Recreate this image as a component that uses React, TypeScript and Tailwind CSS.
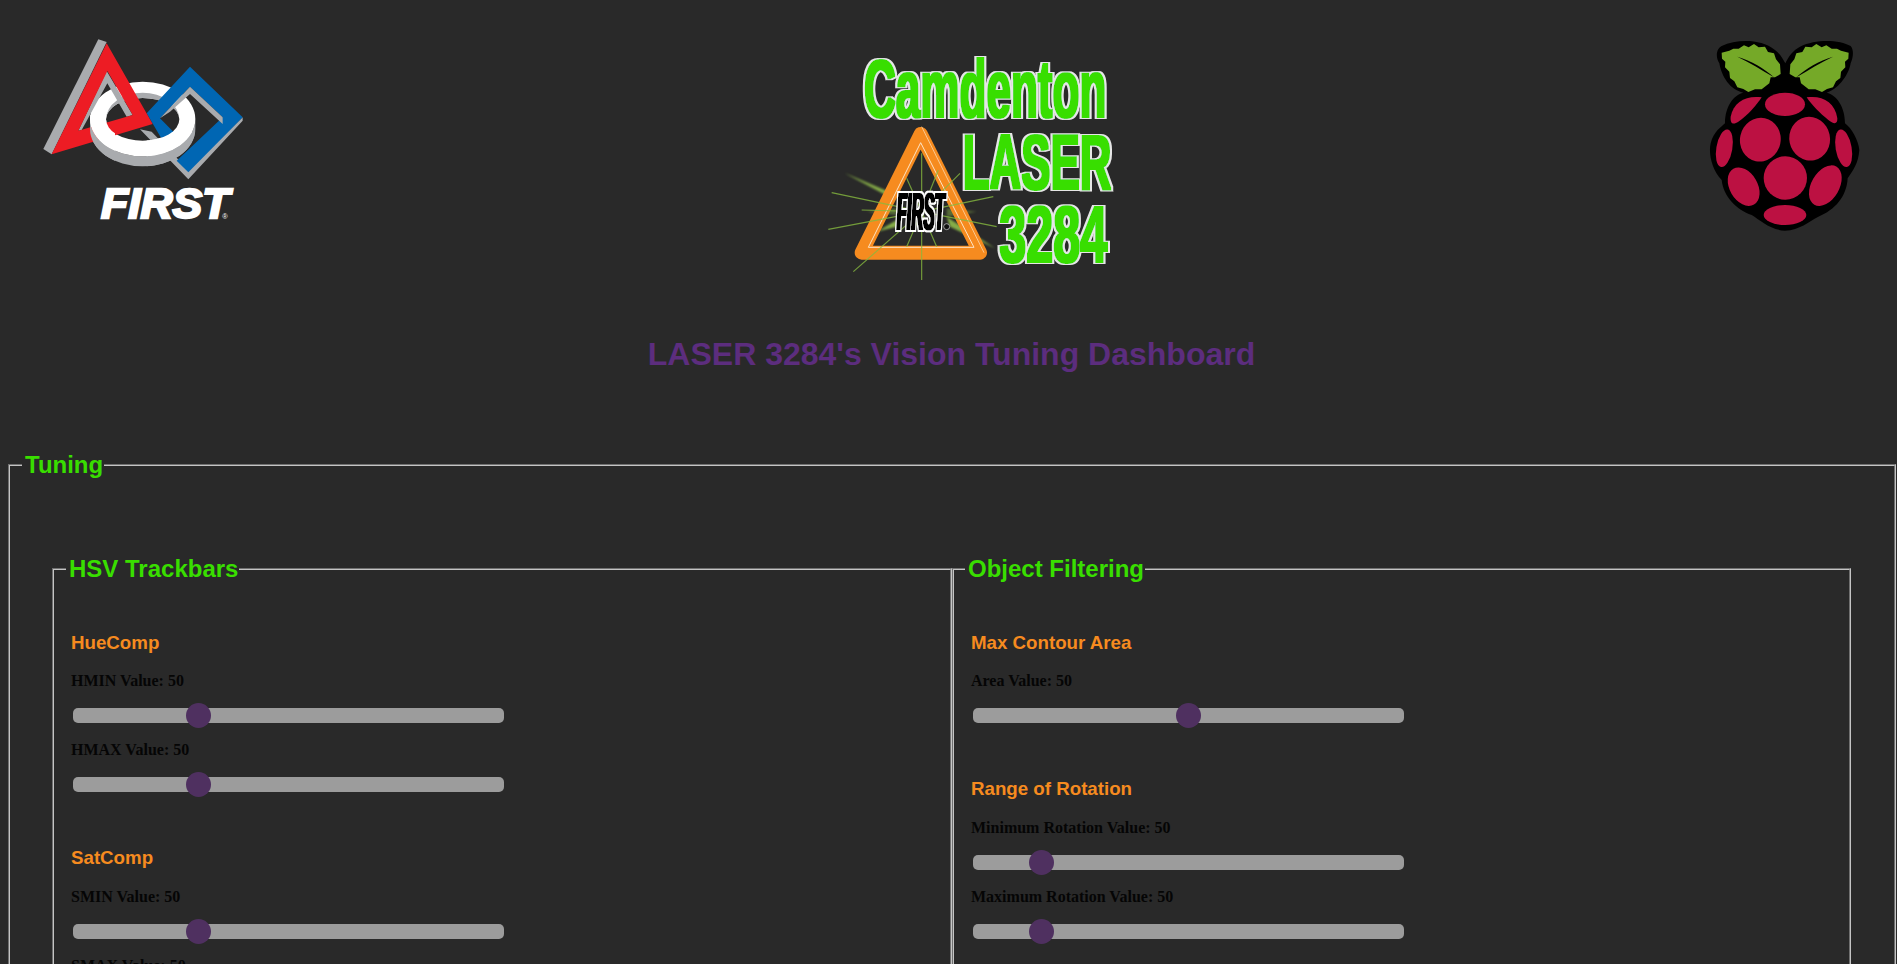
import React from "react";

const SANS = "'Liberation Sans', Arial, sans-serif";

function FirstLogo() {
  const ringOuter = "M270,357 a158,112 0 1,0 316,0 a158,112 0 1,0 -316,0 Z";
  const ringHole = "M318,358 a110,64 0 1,0 220,0 a110,64 0 1,0 -220,0 Z";
  const ringBottom = "M270,357 v30 a158,112 0 0,0 316,0 v-30 a158,112 0 0,1 -316,0 Z";
  const ringWall = "M318,358 a110,64 0 0,1 220,0 a110,80 0 0,0 -220,0 Z";
  const Ring = () => (
    <>
      <path d={ringBottom} fill="#a9abae" />
      <path d={ringOuter + " " + ringHole} fill="#fff" fillRule="evenodd" />
      <path d={ringWall} fill="#a9abae" />
    </>
  );
  return (
    <svg viewBox="0 0 900 750" width={300} height={250} className="block shrink-0">
      <defs>
        <clipPath id="ringLeft"><rect x="260" y="345" width="85" height="170" /></clipPath>
        <clipPath id="ringLow"><polygon points="440,395 620,395 620,520 440,520" /></clipPath>
      </defs>
      <polygon points="420,388 565,538 728,362 728,352 565,510 455,395" fill="#a9abae" />
      <Ring />
      <polygon points="440,340 570,200 728,352 565,517 530,482 668,352 570,260 480,355 520,395 490,425" fill="#0066b3" />
      <polygon points="570,260 668,352 668,372 570,282 510,335 480,355" fill="#a9abae" />
      <polygon points="295,118 320,126 155,463 130,447" fill="#a9abae" />
      <polygon points="320,213 398,345 380,350 322,250 245,390 235,392" fill="#a9abae" />
      <path d="M320,130 L458,372 L155,463 Z M322,213 L235,392 L398,345 Z" fill="#ed1c24" fillRule="evenodd" />
      <g clipPath="url(#ringLeft)"><Ring /></g>
      <g clipPath="url(#ringLow)"><Ring /></g>
      <text x="303" y="653" fontFamily={SANS} fontWeight="700" fontStyle="italic" fontSize="126" fill="#fff" stroke="#fff" strokeWidth="7" textLength="385" lengthAdjust="spacingAndGlyphs">FIRST</text>
      <text x="667" y="657" fontFamily={SANS} fontSize="22" fill="#fff">®</text>
    </svg>
  );
}

function LaserLogo() {
  const thin: [number, number][] = [
    [95, 488], [85, 598], [185, 540], [160, 725], [365, 750], [365, 370], [415, 420],
    [480, 430], [580, 500], [590, 590], [320, 445], [320, 650], [410, 650],
  ];
  const word = {
    fontFamily: SANS,
    fontWeight: 700,
    fill: "#39de00",
    filter: "url(#fat)",
    lengthAdjust: "spacingAndGlyphs",
  } as const;
  return (
    <svg viewBox="0 0 1020 780" width={340} height={260} className="block shrink-0 mt-[30px] ml-[500px]">
      <defs>
        <filter id="fat" x="-5%" y="-10%" width="110%" height="120%">
          <feMorphology in="SourceGraphic" operator="dilate" radius="4 3" result="body" />
          <feMorphology in="SourceAlpha" operator="dilate" radius="8 7" result="edge" />
          <feFlood floodColor="#e6e6e6" />
          <feComposite in2="edge" operator="in" result="outline" />
          <feMerge>
            <feMergeNode in="outline" />
            <feMergeNode in="body" />
          </feMerge>
        </filter>
        <filter id="fatBlack" x="-10%" y="-10%" width="120%" height="120%">
          <feMorphology in="SourceGraphic" operator="dilate" radius="3 1" result="body" />
          <feMorphology in="SourceAlpha" operator="dilate" radius="7 5" result="edge" />
          <feFlood floodColor="#ffffff" />
          <feComposite in2="edge" operator="in" result="outline" />
          <feMerge>
            <feMergeNode in="outline" />
            <feMergeNode in="body" />
          </feMerge>
        </filter>
        <filter id="glow"><feGaussianBlur stdDeviation="3" /></filter>
      </defs>
      <text x="192" y="262" fontSize="244" textLength="727" {...word}>Camdenton</text>
      <g fill="#9ecf50" filter="url(#glow)" opacity="0.8">
        <polygon points="135,430 290,495 285,510" />
        <polygon points="585,655 440,560 450,590" />
        <polygon points="200,545 290,535 290,555" opacity="0.5" />
        <polygon points="230,605 290,570 290,590" />
        <polygon points="530,545 440,535 440,560" opacity="0.5" />
      </g>
      <path d="M362,312 L540,668 L185,668 Z" fill="none" stroke="#f68b1f" strokeWidth="42" strokeLinejoin="round" />
      <path d="M205,652 H522 L362,338 Z" fill="none" stroke="#fde3c4" strokeWidth="3" />
      <path d="M365,290 L552,668" fill="none" stroke="#fbc88f" strokeWidth="3" />
      {thin.map(([x, y], i) => (
        <line key={i} x1="365" y1="545" x2={x} y2={y} stroke="#86b93f" strokeWidth="3.5" opacity="0.8" />
      ))}
      <text x="290" y="600" fontFamily={SANS} fontWeight="700" fontStyle="italic" fontSize="160" fill="#000" filter="url(#fatBlack)" textLength="144" lengthAdjust="spacingAndGlyphs">FIRST</text>
      <circle cx="440" cy="590" r="9" fill="#111" stroke="#ddd" strokeWidth="2" />
      <text x="488" y="478" fontSize="236" textLength="446" {...word}>LASER</text>
      <text x="598" y="696" fontSize="238" textLength="324" {...word}>3284</text>
    </svg>
  );
}

function RaspberryLogo() {
  const leaf = "M125,98 L148,92 L160,86 L176,86 L192,76 L206,82 L222,72 L236,82 L255,80 L264,96 L282,100 L288,118 L300,133 L302,162 L285,172 L272,172 L268,190 L245,208 L225,208 L205,216 L190,207 L172,202 L163,184 L150,174 L148,155 L135,142 L136,125 L126,116 Z";
  const vein = "M172,110 C215,122 252,145 282,172 C245,150 210,128 172,110 Z";
  const berry = "#bc1142";
  return (
    <svg viewBox="0 0 651 690" width={217} height={230} className="block shrink-0 mt-[20px] ml-[540px]">
      <path
        d="M315,632 C270,630 240,600 215,585 C170,570 130,530 125,480 C95,450 85,400 92,370 C100,335 125,320 135,310 C135,260 160,225 190,218 C150,210 125,170 118,130 C105,110 110,85 125,78 C170,58 240,55 285,90 C300,100 310,120 316,130 C325,110 340,90 360,80 C410,55 480,60 512,78 C522,90 520,110 512,130 C505,170 470,210 440,218 C470,225 495,260 495,310 C515,325 535,360 538,390 C535,430 520,450 503,475 C500,530 465,570 415,590 C385,605 360,630 315,632 Z"
        fill="#000"
      />
      <path d={leaf} fill="#75a928" />
      <path d={vein} fill="#000" />
      <g transform="translate(631,0) scale(-1,1)">
        <path d={leaf} fill="#75a928" />
        <path d={vein} fill="#000" />
      </g>
      <g fill={berry}>
        <ellipse cx="315" cy="253" rx="60" ry="35" />
        <path d="M245,232 C200,225 160,245 152,290 C150,312 160,315 175,305 C205,285 230,255 245,232 Z" />
        <path d="M380,232 C425,225 465,245 472,295 C473,315 460,312 445,300 C420,280 395,255 380,232 Z" />
        <ellipse cx="241" cy="359" rx="61" ry="66" transform="rotate(12 241 359)" />
        <ellipse cx="389" cy="356" rx="61" ry="66" transform="rotate(-12 389 356)" />
        <ellipse cx="133" cy="385" rx="24" ry="57" transform="rotate(10 133 385)" />
        <ellipse cx="491" cy="385" rx="24" ry="57" transform="rotate(-10 491 385)" />
        <circle cx="316" cy="474" r="65" />
        <ellipse cx="191" cy="500" rx="42" ry="62" transform="rotate(-30 191 500)" />
        <ellipse cx="436" cy="497" rx="42" ry="66" transform="rotate(30 436 497)" />
        <ellipse cx="315" cy="585" rx="64" ry="30" />
      </g>
    </svg>
  );
}

function Slider({ label, max }: { label: string; max: number }) {
  return (
    <div className="mb-[18px]">
      <div className="font-['Liberation_Serif',serif] font-bold text-[16px] leading-[18px] text-[#050505] mb-[18px]">
        {label}: 50
      </div>
      <input
        type="range"
        min={0}
        max={max}
        defaultValue={50}
        className="block ml-[2px] w-[431px] h-[15px] appearance-none rounded-[5px] bg-[#9c9c9c] outline-none [&::-webkit-slider-thumb]:appearance-none [&::-webkit-slider-thumb]:w-[25px] [&::-webkit-slider-thumb]:h-[25px] [&::-webkit-slider-thumb]:rounded-full [&::-webkit-slider-thumb]:bg-[#4f3060]"
      />
    </div>
  );
}

function Heading({ children }: { children: React.ReactNode }) {
  return <h3 className="text-[18.72px] leading-[21px] font-bold text-[#f68b1f] mb-[19px]">{children}</h3>;
}

function Legend({ children }: { children: React.ReactNode }) {
  return <legend className="pl-[3px] pr-[1px] text-[24px] leading-[28px] font-bold text-[#39de00]">{children}</legend>;
}

export default function App() {
  return (
    <div className="h-[964px] w-[1897px] overflow-hidden bg-[#292929] font-['Liberation_Sans',Arial,sans-serif]">
      <header className="flex items-start h-[290px]">
        <FirstLogo />
        <LaserLogo />
        <RaspberryLogo />
      </header>
      <h1 className="text-center pl-[6px] text-[32px] leading-[37px] font-bold text-[#5c2d7e] mt-[46px]">
        LASER 3284's Vision Tuning Dashboard
      </h1>
      <fieldset className="ml-[8px] mt-[78px] w-[1888px] border-2 [border-style:groove] border-[#c4c4c4] px-[12px] pb-[40px]">
        <Legend>Tuning</Legend>
        <div className="flex mx-[30px] mt-[76px]">
          <fieldset className="w-[900px] border-2 [border-style:groove] border-[#c4c4c4] px-[12px] pt-[49px]">
            <Legend>HSV Trackbars</Legend>
            <div className="pl-[5px]">
              <Heading>HueComp</Heading>
              <Slider label="HMIN Value" max={180} />
              <Slider label="HMAX Value" max={180} />
              <div className="h-[37px]" />
              <Heading>SatComp</Heading>
              <div className="h-px" />
              <Slider label="SMIN Value" max={180} />
              <Slider label="SMAX Value" max={180} />
            </div>
          </fieldset>
          <fieldset className="w-[899px] border-2 [border-style:groove] border-[#c4c4c4] pl-[11px] pr-[12px] pt-[49px]">
            <Legend>Object Filtering</Legend>
            <div className="pl-[6px]">
              <Heading>Max Contour Area</Heading>
              <Slider label="Area Value" max={100} />
              <div className="h-[37px]" />
              <Heading>Range of Rotation</Heading>
              <div className="h-px" />
              <Slider label="Minimum Rotation Value" max={360} />
              <Slider label="Maximum Rotation Value" max={360} />
            </div>
          </fieldset>
        </div>
      </fieldset>
    </div>
  );
}
